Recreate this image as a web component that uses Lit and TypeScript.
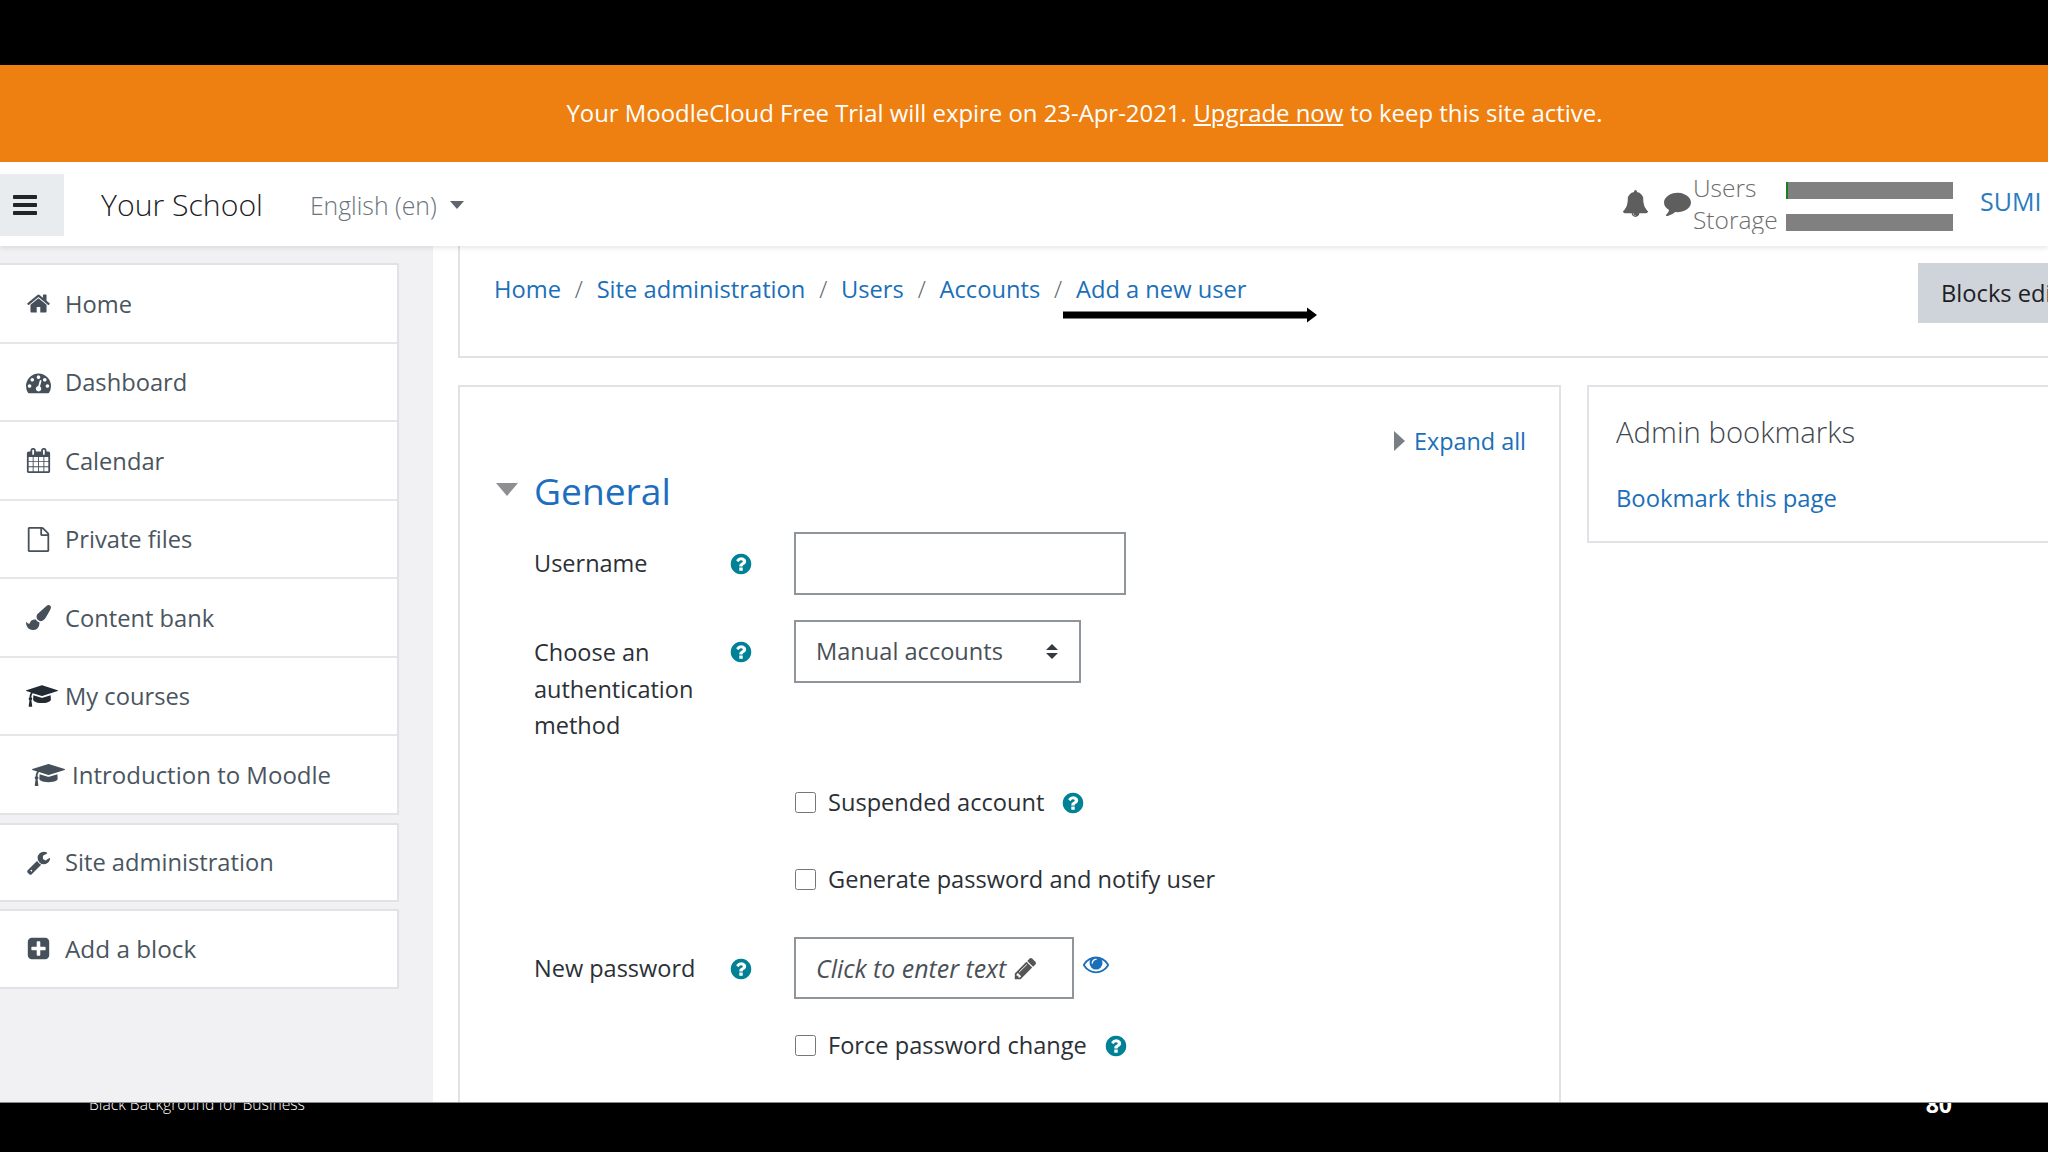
import { LitElement, html, css, svg } from "lit";
import { customElement } from "lit/decorators.js";

const P: Record<string, [string, string]> = {
  home: ["0 0 1792 1792", "M1472 992v480q0 26-19 45t-45 19h-384v-384h-256v384h-384q-26 0-45-19t-19-45v-480q0-1 .5-3t.5-3l575-474 575 474q1 2 1 6zm223-69l-62 74q-8 9-21 11h-3q-13 0-21-7l-692-577-692 577q-12 8-24 7-13-2-21-11l-62-74q-8-10-7-23.500t11-21.500l719-599q32-26 76-26t76 26l244 204v-195q0-14 9-23t23-9h192q14 0 23 9t9 23v408l219 182q10 8 11 21.500t-7 23.500z"],
  bell: ["0 0 1792 1792", "M912 1696q0-16-16-16-59 0-101.500-42.500t-42.500-101.500q0-16-16-16t-16 16q0 73 51.500 124.500t124.500 51.500q16 0 16-16zm816-288q0 52-38 90t-90 38h-448q0 106-75 181t-181 75-181-75-75-181h-448q-52 0-90-38t-38-90q50-42 91-88t85-119.500 74.500-158.500 50-206 19.500-260q0-152 117-282.500t307-158.500q-8-19-8-39 0-40 28-68t68-28 68 28 28 68q0 20-8 39 190 28 307 158.500t117 282.500q0 139 19.500 260t50 206 74.500 158.500 85 119.500 91 88z"],
  comment: ["0 0 1792 1792", "M1792 896q0 174-120 321.500t-326 233-450 85.500q-70 0-145-8-198 175-460 242-49 14-114 22-17 2-30.500-9t-17.500-29v-1q-3-4-.5-12t2-10 4.500-9.500l6-9 7-8.500 8-9q7-8 31-34.500t34.500-38 31-39.500 32.500-51 27-59 26-76q-157-89-247.500-220t-90.500-281q0-130 71-248.500t191-204.500 286-136.500 348-50.500q244 0 450 85.500t326 233 120 321.500z"],
  help: ["0 0 1792 1792", "M1024 1376v-192q0-14-9-23t-23-9h-192q-14 0-23 9t-9 23v192q0 14 9 23t23 9h192q14 0 23-9t9-23zm256-672q0-88-55.500-163t-138.500-116-170-41q-243 0-371 213-15 24 8 42l132 100q7 6 19 6 16 0 25-12 53-68 86-92 34-24 86-24 48 0 85.500 26t37.500 59q0 38-20 61t-68 45q-63 28-115.500 86.500t-52.500 125.500v36q0 14 9 23t23 9h192q14 0 23-9t9-23q0-19 21.500-49.500t54.500-49.500q32-18 49-28.500t46-35 44.500-48 28-60.500 12.500-81zm384 192q0 209-103 385.500t-279.500 279.500-385.500 103-385.500-103-279.500-279.500-103-385.500 103-385.500 279.500-279.500 385.500-103 385.500 103 279.500 279.500 103 385.500z"],
  plus: ["0 0 1792 1792", "M1408 960v-128q0-26-19-45t-45-19h-320v-320q0-26-19-45t-45-19h-128q-26 0-45 19t-19 45v320h-320q-26 0-45 19t-19 45v128q0 26 19 45t45 19h320v320q0 26 19 45t45 19h128q26 0 45-19t19-45v-320h320q26 0 45-19t19-45zm256-544v960q0 119-84.500 203.500t-203.500 84.500h-960q-119 0-203.500-84.500t-84.500-203.500v-960q0-119 84.500-203.500t203.500-84.500h960q119 0 203.500 84.500t84.500 203.500z"],
  cap: ["0 0 2304 1792", "M1774 836l18 316q4 69-82 128t-235 93.500-323 34.500-323-34.500-235-93.500-82-128l18-316 574 181q22 7 48 7t48-7zm530-324q0 23-22 31l-1120 352q-4 1-10 1t-10-1l-652-206q-43 34-71 111.500t-34 178.500q63 36 63 109 0 69-58 107l58 433q2 14-8 25-9 11-24 11h-192q-15 0-24-11-10-11-8-25l58-433q-58-38-58-107 0-73 65-111 11-207 98-330l-333-104q-22-8-22-31t22-31l1120-352q4-1 10-1t10 1l1120 352q22 8 22 31z"],
  wrench: ["0 0 1792 1792", "M448 1472q0-26-19-45t-45-19-45 19-19 45 19 45 45 19 45-19 19-45zm644-420l-682 682q-37 37-90 37-52 0-91-37l-106-108q-38-36-38-90 0-53 38-91l681-681q39 98 114.500 173.500t173.500 114.500zm634-435q0 39-23 106-47 134-164.500 217.500t-258.500 83.500q-185 0-316.500-131.500t-131.500-316.500 131.500-316.500 316.500-131.500q58 0 121.500 16.500t107.500 46.500q16 11 16 28t-16 28l-293 169v224l193 107q5-3 79-48.500t135.500-81 70.500-35.500q15 0 23.500 10t8.500 25z"],
  brush: ["0 0 1792 1792", "M1615 0q70 0 122.500 46.500t52.500 116.500q0 63-45 151-332 629-465 752-97 91-218 91-126 0-216.500-92.500t-90.500-219.500q0-128 92-212l638-579q59-54 130-54zm-909 1034q39 76 106.500 130t150.500 76l1 71q4 213-129.500 347t-348.500 134q-123 0-218-46.500t-152.500-127.500-86.500-183-29-220q7 5 41 30t62 44.500 59 36.500 46 17q41 0 55-37 25-66 57.500-112.500t69.500-76 88-47.500 103-25.500 125-10.500z"],
  pencil: ["0 0 1792 1792", "M491 1536l91-91-235-235-91 91v107h128v128h107zm523-928q0-22-22-22-10 0-17 7l-542 542q-7 7-7 17 0 22 22 22 10 0 17-7l542-542q7-7 7-17zm-54-192l416 416-832 832h-416v-416zm683 96q0 53-37 90l-166 166-416-416 166-165q36-38 90-38 53 0 91 38l235 234q37 39 37 91z"],
  file: ["0 0 1792 1792", "M1596 380q28 28 48 76t20 88v1152q0 40-28 68t-68 28h-1344q-40 0-68-28t-28-68v-1600q0-40 28-68t68-28h896q40 0 88 20t76 48zm-444-244v376h376q-10-29-22-41l-313-313q-12-12-41-22zm384 1528v-1024h-416q-40 0-68-28t-28-68v-416h-768v1536h1280z"],
  calendar: ["0 0 1792 1792", "M192 1664h288v-288h-288v288zm352 0h320v-288h-320v288zm-352-352h288v-320h-288v320zm352 0h320v-320h-320v320zm-352-384h288v-288h-288v288zm736 736h320v-288h-320v288zm-384-736h320v-288h-320v288zm768 736h288v-288h-288v288zm-384-352h320v-320h-320v320zm-352-864v-288q0-13-9.500-22.500t-22.500-9.500h-64q-13 0-22.500 9.500t-9.500 22.500v288q0 13 9.500 22.500t22.500 9.500h64q13 0 22.500-9.500t9.500-22.500zm736 864h288v-320h-288v320zm-384-384h320v-288h-320v288zm384 0h288v-288h-288v288zm32-480v-288q0-13-9.500-22.500t-22.500-9.500h-64q-13 0-22.500 9.500t-9.500 22.500v288q0 13 9.500 22.500t22.500 9.500h64q13 0 22.500-9.500t9.500-22.500zm384-64v1280q0 52-38 90t-90 38h-1408q-52 0-90-38t-38-90v-1280q0-52 38-90t90-38h128v-96q0-66 47-113t113-47h64q66 0 113 47t47 113v96h384v-96q0-66 47-113t113-47h64q66 0 113 47t47 113v96h128q52 0 90 38t38 90z"],
  dash: ["0 0 1792 1792", "M384 1152q0-53-37.500-90.500t-90.500-37.500-90.500 37.500-37.500 90.500 37.500 90.500 90.500 37.500 90.500-37.500 37.500-90.500zm192-448q0-53-37.500-90.500t-90.500-37.500-90.500 37.500-37.500 90.500 37.500 90.500 90.500 37.500 90.500-37.500 37.500-90.500zm428 481l101-382q6-26-7.500-48.500t-38.500-29.500-48 6.500-30 39.500l-101 382q-60 5-107 43.500t-63 98.500q-20 77 20 146t117 89 146-20 89-117q16-60-6-117t-72-91zm660-33q0-53-37.500-90.500t-90.500-37.500-90.500 37.500-37.500 90.500 37.500 90.500 90.500 37.500 90.500-37.500 37.500-90.500zm-640-640q0-53-37.500-90.500t-90.500-37.500-90.500 37.500-37.500 90.500 37.500 90.500 90.500 37.500 90.500-37.500 37.500-90.500zm448 192q0-53-37.500-90.500t-90.500-37.500-90.500 37.500-37.500 90.500 37.500 90.500 90.500 37.500 90.500-37.500 37.500-90.500zm320 448q0 261-141 483-19 29-54 29h-1402q-35 0-54-29-141-221-141-483 0-182 71-348t191-286 286-191 348-71 348 71 286 191 191 286 71 348z"],
  eye: ["0 0 1792 1792", "M1664 960q-152-236-381-353 61 104 61 225 0 185-131.500 316.500t-316.500 131.500-316.500-131.500-131.500-316.500q0-121 61-225-229 117-381 353 133 205 333.500 326.500t434.500 121.500 434.500-121.500 333.500-326.500zm-720-384q0-20-14-34t-34-14q-125 0-214.500 89.500t-89.500 214.500q0 20 14 34t34 14 34-14 14-34q0-86 61-147t147-61q20 0 34-14t14-34zm848 384q0 34-20 69-140 230-376.500 368.500t-499.500 138.500-499.500-139-376.500-368q-20-35-20-69t20-69q140-229 376.500-368t499.500-139 499.500 139 376.500 368q20 35 20 69z"],
  bars: ["0 0 1792 1792", "M1664 1344v128q0 26-19 45t-45 19h-1408q-26 0-45-19t-19-45v-128q0-26 19-45t45-19h1408q26 0 45 19t19 45zm0-512v128q0 26-19 45t-45 19h-1408q-26 0-45-19t-19-45v-128q0-26 19-45t45-19h1408q26 0 45 19t19 45zm0-512v128q0 26-19 45t-45 19h-1408q-26 0-45-19t-19-45v-128q0-26 19-45t45-19h1408q26 0 45 19t19 45z"],
};

const ic = (name: string, cls = "") => {
  const [vb, d] = P[name];
  return html`<svg class="ic ${cls}" viewBox=${vb} aria-hidden="true">${svg`<path d=${d}></path>`}</svg>`;
};

@customElement("app-root")
export class AppRoot extends LitElement {
  static styles = css`
    :host {
      display: block;
      width: 2048px;
      height: 1152px;
      overflow: hidden;
      background: #000;
      font-family: "Open Sans", "Noto Sans", sans-serif;
      font-size: 23.7px;
      color: #1d2125;
    }
    * { box-sizing: border-box; }
    a { color: #1b6fb8; text-decoration: none; }
    .ic { display: block; fill: currentColor; flex: none; }

    .top { height: 65px; background: #000; }
    .banner {
      height: 97px;
      padding-left: 121px;
      background: #ee8012;
      color: #fff;
      display: flex;
      align-items: center;
      justify-content: center;
      font-size: 23.9px;
      padding-bottom: 2px;
    }
    .banner a { color: #fff; text-decoration: underline; margin: 0 0.28em; }

    .app { height: 940px; display: flex; flex-direction: column; background: #fff; overflow: hidden; }
    .nav {
      flex: none;
      height: 84px;
      padding-top: 12px;
      display: flex;
      align-items: flex-start;
      background: #fff;
      box-shadow: 0 2px 5px rgba(0, 0, 0, 0.1);
      position: relative;
      z-index: 2;
    }
    .burger {
      width: 64px;
      height: 62px;
      background: #e9ecef;
      color: #212529;
      display: flex;
      align-items: center;
      justify-content: center;
    }
    .burger .ic { width: 28px; height: 28px; margin-left: -14px; }
    .brand { margin-left: 37px; font-size: 30.2px; line-height: 62px; font-weight: 300; color: #1d2125; }
    .lang {
      margin-left: 47px;
      line-height: 62px;
      font-size: 24.8px;
      color: #6a737b;
      font-weight: 300;
      display: flex;
      align-items: center;
      gap: 13px;
    }
    .caret { width: 0; height: 0; border: 7px solid transparent; border-top: 8px solid #5f666d; border-bottom: 0; }
    .right {
      margin-left: auto;
      width: 426px;
      height: 72px;
      margin-top: -12px;
      overflow: hidden;
      display: flex;
      align-items: flex-start;
      flex: none;
      color: #6a6a6a;
    }
    .bell { width: 27px; height: 27px; margin-top: 28px; color: #5e5e5e; }
    .chat { width: 27px; height: 27px; margin: 27px 2px 0 15px; color: #5e5e5e; }
    .usage {
      display: grid;
      grid-template-columns: 93px 167px;
      grid-auto-rows: 32px;
      align-items: center;
      margin-top: 10px;
      font-size: 24.5px;
      line-height: 32px;
      font-weight: 300;
      color: #6c6c6c;
      flex: none;
    }
    .bar { height: 17px; margin-top: 5px; background: #808080; }
    .bar.users { border-left: 2px solid #1e7b1e; }
    .user { margin-left: 27px; margin-top: 22px; color: #2b7cc0; white-space: nowrap; font-size: 25px; flex: none; }

    .body { flex: 1; min-height: 0; display: flex; }
    .side { flex: none; width: 433px; background: #f1f1f4; padding-top: 17px; }
    .card { width: 399px; background: #fff; border: 2px solid #e2e2e6; border-left: 0; margin-bottom: 8px; }
    .item {
      height: 78.5px;
      display: flex;
      align-items: center;
      padding-left: 26px;
      padding-top: 1px;
      gap: 14px;
      color: #4a5560;
    }
    .item:first-child { height: 76.5px; }
    .item + .item { border-top: 2px solid #e6e6ea; }
    .item .ic { width: 25px; height: 25px; color: #46505a; }
    .item.cap { gap: 7px; }
    .item.cap .ic { width: 32px; height: 26px; color: #222a33; }
    .item.sub { padding-left: 32px; gap: 7px; font-size: 24px; }
    .item.sub .ic { width: 33px; height: 26px; color: #46505a; }
    .single { margin-bottom: 7px; }
    .single .item:first-child { height: 75.5px; padding-top: 0; }
    .item.wide { font-size: 24.3px; }

    .main { flex: 1; min-width: 0; padding-left: 25px; overflow: hidden; }
    .crumbbox {
      height: 112px;
      border-left: 2px solid #e2e2e6;
      border-bottom: 2px solid #e2e2e6;
      display: flex;
      align-items: flex-start;
      padding-left: 34px;
      position: relative;
    }
    .crumbs {
      flex: none;
      width: 1424px;
      margin-top: 25px;
      line-height: 36px;
      display: flex;
      gap: 13.8px;
      color: #5a6168;
    }
    .sep { font-weight: 300; }
    .btn {
      flex: none;
      margin-top: 17px;
      height: 60px;
      padding: 0 23px;
      background: #ced4da;
      display: flex;
      align-items: center;
      white-space: nowrap;
      color: #1d2125;
    }
    .arrow { position: absolute; left: 603px; top: 60px; width: 254px; height: 18px; }
    .cols { display: flex; gap: 26px; margin-top: 27px; width: 1800px; align-items: flex-start; }
    .form {
      flex: none;
      width: 1103px;
      height: 780px;
      border: 2px solid #e2e2e6;
      padding-left: 74px;
      position: relative;
    }
    .expand {
      display: flex;
      justify-content: flex-end;
      align-items: center;
      gap: 9px;
      height: 36px;
      margin-top: 36px;
      margin-right: 33px;
      font-size: 23.4px;
    }
    .tri-r { width: 0; height: 0; border: 10px solid transparent; border-left: 11px solid #7a7f85; border-right: 0; }
    .general { display: flex; align-items: center; height: 52px; margin-top: 5px; margin-bottom: 1px; margin-left: -38px; gap: 16px; }
    .tri-d { width: 0; height: 0; border: 11px solid transparent; border-top: 13px solid #8f8f92; border-bottom: 0; margin-top: -2px; }
    .general h3 { margin: 0; font-size: 37.2px; font-weight: 400; color: #1e6ec0; }
    .row { display: grid; grid-template-columns: 195px 65px 1fr; align-items: start; }
    .lbl { line-height: 36.6px; font-size: 23.5px; width: 190px; color: #2b3036; padding-top: 13px; }
    .lbl.tall { padding-top: 14px; }
    .help { width: 24px; height: 24px; color: #008196; }
    .hcell { padding-top: 20px; }
    .input { height: 63px; border: 2px solid #8f959b; }
    .r1 { margin-top: 16px; }
    .r1 .input { width: 332px; }
    .r2 { margin-top: 25px; height: 124px; }
    .select {
      width: 287px;
      height: 63px;
      border: 2px solid #8f959b;
      padding: 0 20px;
      display: flex;
      align-items: center;
      justify-content: space-between;
      font-size: 23.6px;
      color: #495057;
      padding-bottom: 2px;
    }
    .updown { display: flex; flex-direction: column; gap: 3px; margin-right: 1px; margin-top: 2px; }
    .updown i { display: block; width: 0; height: 0; border: 6px solid transparent; }
    .updown .u { border-bottom: 6px solid #343a40; border-top: 0; }
    .updown .d { border-top: 6px solid #343a40; border-bottom: 0; }
    .check { grid-column: 3; display: flex; align-items: center; height: 36px; font-size: 23.6px; color: #2b3036; white-space: nowrap; }
    .check input { width: 21px; height: 21px; margin: 0 12px 0 1px; flex: none; }
    .check .help { margin-left: 17px; margin-top: 2px; }
    .r3 { margin-top: 40px; }
    .r4 { margin-top: 41px; }
    .r5 { margin-top: 40px; }
    .r6 { margin-top: 28px; }
    .pwline { display: flex; align-items: flex-start; gap: 9px; }
    .pw {
      width: 280px;
      height: 62px;
      border: 2px solid #8f959b;
      padding-left: 20px;
      display: flex;
      align-items: center;
      gap: 7px;
      font-style: italic;
      font-size: 24.9px;
      color: #495057;
      white-space: nowrap;
    }
    .pw .ic { width: 25px; height: 25px; color: #555; }
    .eye { width: 26px; height: 26px; color: #1b6fb8; margin-top: 14px; }
    .aside {
      flex: none;
      width: 600px;
      height: 158px;
      border: 2px solid #e2e2e6;
      padding: 25px 0 0 27px;
    }
    .aside h5 { margin: 0; font-size: 29.3px; line-height: 40px; font-weight: 300; color: #40464d; }
    .aside a { display: block; margin-top: 28px; line-height: 36px; font-size: 23.8px; }

    .foot {
      height: 50px;
      background: #000;
      border-top: 1px solid #8a8a8a;
      overflow: hidden;
      display: flex;
      align-items: flex-start;
      justify-content: space-between;
      padding: 0 96px 0 89px;
      color: #fff;
    }
    .foot .cap2 { font-size: 15.7px; line-height: 20px; margin-top: -9px; font-weight: 300; }
    .foot .num { font-size: 23px; line-height: 30px; font-weight: 700; margin-top: -14px; }
  `;

  render() {
    const help = ic("help", "help");
    return html`
      <div class="top"></div>
      <div class="banner">Your MoodleCloud Free Trial will expire on 23-Apr-2021.<a href="#">Upgrade now</a>to keep this site active.</div>
      <div class="app">
        <header class="nav">
          <div class="burger">${ic("bars")}</div>
          <div class="brand">Your School</div>
          <div class="lang">English (en) <span class="caret"></span></div>
          <div class="right">
            ${ic("bell", "bell")}
            ${ic("comment", "chat")}
            <div class="usage">
              <span>Users</span><div class="bar users"></div>
              <span>Storage</span><div class="bar"></div>
            </div>
            <a class="user" href="#">SUMI SHARMA</a>
          </div>
        </header>
        <div class="body">
          <nav class="side">
            <div class="card">
              <div class="item">${ic("home")}Home</div>
              <div class="item">${ic("dash")}Dashboard</div>
              <div class="item">${ic("calendar")}Calendar</div>
              <div class="item">${ic("file")}Private files</div>
              <div class="item">${ic("brush")}Content bank</div>
              <div class="item cap">${ic("cap")}My courses</div>
              <div class="item sub">${ic("cap")}Introduction to Moodle</div>
            </div>
            <div class="card single"><div class="item">${ic("wrench")}Site administration</div></div>
            <div class="card single"><div class="item wide">${ic("plus")}Add a block</div></div>
          </nav>
          <main class="main">
            <div class="crumbbox">
              <div class="crumbs">
                <a href="#">Home</a><span class="sep">/</span>
                <a href="#">Site administration</a><span class="sep">/</span>
                <a href="#">Users</a><span class="sep">/</span>
                <a href="#">Accounts</a><span class="sep">/</span>
                <a href="#">Add a new user</a>
              </div>
              <div class="btn">Blocks editing on</div>
              <svg class="arrow" viewBox="0 0 254 18" aria-hidden="true">
                <rect x="0" y="5.5" width="246" height="7" fill="#000"></rect>
                <path d="M244 1.500l10 7.500-10 7.500z" fill="#000"></path>
              </svg>
            </div>
            <div class="cols">
              <section class="form">
                <div class="expand"><span class="tri-r"></span><a href="#">Expand all</a></div>
                <div class="general"><span class="tri-d"></span><h3>General</h3></div>
                <div class="row r1">
                  <div class="lbl">Username</div>
                  <div class="hcell">${help}</div>
                  <input class="input" type="text" />
                </div>
                <div class="row r2">
                  <div class="lbl tall">Choose an authentication method</div>
                  <div class="hcell">${help}</div>
                  <div class="select">Manual accounts<span class="updown"><i class="u"></i><i class="d"></i></span></div>
                </div>
                <div class="row r3"><label class="check"><input type="checkbox" />Suspended account${help}</label></div>
                <div class="row r4"><label class="check"><input type="checkbox" />Generate password and notify user</label></div>
                <div class="row r5">
                  <div class="lbl">New password</div>
                  <div class="hcell">${help}</div>
                  <div class="pwline">
                    <div class="pw">Click to enter text ${ic("pencil")}</div>
                    ${ic("eye", "eye")}
                  </div>
                </div>
                <div class="row r6"><label class="check"><input type="checkbox" />Force password change${help}</label></div>
              </section>
              <aside class="aside">
                <h5>Admin bookmarks</h5>
                <a href="#">Bookmark this page</a>
              </aside>
            </div>
          </main>
        </div>
      </div>
      <footer class="foot">
        <span class="cap2">Black Background for Business</span>
        <span class="num">80</span>
      </footer>
    `;
  }
}
